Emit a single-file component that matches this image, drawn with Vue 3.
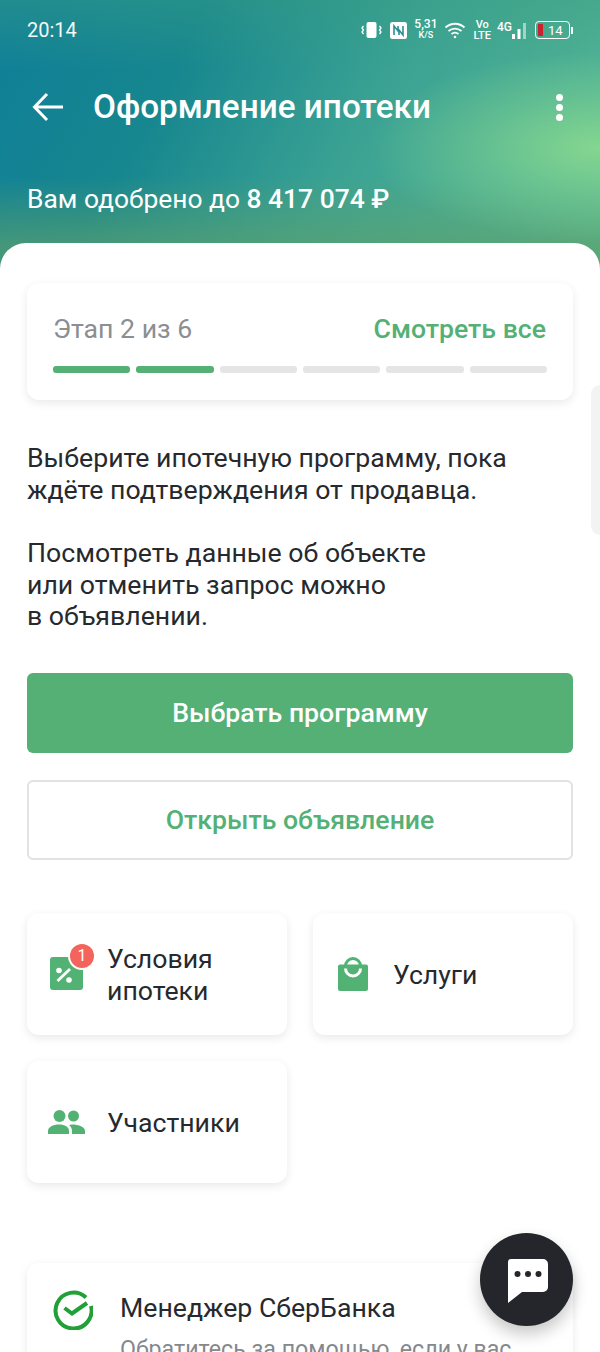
<template>
  <div class="screen">
    <header class="hero">
      <div class="status">
        <span class="time">20:14</span>
        <div class="status_icons">
          <svg width="23" height="20" viewBox="0 0 23 20" fill="none" stroke="#fff" stroke-width="1.3">
            <rect x="6.500" y="2" width="10" height="16" rx="2" fill="#fff" stroke="none" />
            <path d="M3.500 6l-1.500 2 1.500 2-1.500 2 1.500 2M19.500 6l1.500 2-1.500 2 1.500 2-1.500 2" />
          </svg>
          <svg class="nfc" width="17" height="17" viewBox="0 0 17 17">
            <rect width="17" height="17" rx="2.500" fill="#fff" />
            <path d="M4 13V4l4 5V4M9 13V8l4 5V4" fill="none" stroke="#2a8f93" stroke-width="1.600" />
          </svg>
          <div class="speed"><span>5,31</span><span class="speed_unit">K/S</span></div>
          <svg class="wifi" width="22" height="18" viewBox="0 0 22 18" fill="none" stroke="#fff" stroke-width="1.800">
            <path d="M1.500 6.500c5.500-5 13.500-5 19 0M4.500 10c3.800-3.300 9.200-3.300 13 0M7.500 13c2-1.600 5-1.600 7 0" />
            <circle cx="11" cy="16" r="1.300" fill="#fff" stroke="none" />
          </svg>
          <div class="volte"><span>Vo</span><span>LTE</span></div>
          <div class="signal">
            <span class="net">4G</span>
            <svg width="15" height="17" viewBox="0 0 15 17" fill="#fff">
              <rect x="0" y="12" width="3" height="5" />
              <rect x="5.500" y="7" width="3" height="10" />
              <rect x="11" y="1" width="3" height="16" opacity="0.5" />
            </svg>
          </div>
          <div class="battery">
            <div class="battery_body"><i></i><span>14</span></div>
            <b></b>
          </div>
        </div>
      </div>
      <div class="toolbar">
        <svg class="back" width="34" height="32" viewBox="0 0 34 32" fill="none" stroke="#fff" stroke-width="3">
          <path d="M32 16H4M16 3L3.500 16 16 29" />
        </svg>
        <h1>Оформление ипотеки</h1>
        <div class="dots"><i></i><i></i><i></i></div>
      </div>
      <p class="approved">Вам одобрено до <b>8 417 074 ₽</b></p>
    </header>

    <main class="sheet">
      <section class="card steps">
        <div class="steps_top">
          <span class="steps_label">Этап 2 из 6</span>
          <span class="steps_link">Смотреть все</span>
        </div>
        <div class="bars">
          <i v-for="n in 6" :key="n" :class="{ on: n <= 2 }"></i>
        </div>
      </section>

      <div class="intro">
        <p>Выберите ипотечную программу, пока<br>ждёте подтверждения от продавца.</p>
        <p>Посмотреть данные об объекте<br>или отменить запрос можно<br>в объявлении.</p>
      </div>

      <button class="btn primary">Выбрать программу</button>
      <button class="btn outline">Открыть объявление</button>

      <div class="tiles">
        <div class="card tile">
          <div class="tile_icon">
            <svg width="36" height="36" viewBox="0 0 36 36">
              <path d="M29 13h5v18a3 3 0 0 1-3 3h-6v-2h3a1 1 0 0 0 1-1z" fill="#52b274" />
              <rect x="1" y="1" width="28" height="33" rx="3" fill="#52b274" />
              <path d="M8.500 25L21 13" stroke="#fff" stroke-width="2.800" />
              <circle cx="10" cy="14.500" r="2.800" fill="#fff" />
              <circle cx="20" cy="24" r="2.800" fill="#fff" />
            </svg>
            <span class="badge">1</span>
          </div>
          <span class="tile_text">Условия<br>ипотеки</span>
        </div>
        <div class="card tile">
          <div class="tile_icon">
            <svg width="32" height="36" viewBox="0 0 32 36">
              <circle cx="16" cy="10" r="7.500" fill="none" stroke="#52b274" stroke-width="3" />
              <path d="M3 8.500h26a2 2 0 0 1 2 2V33a2 2 0 0 1-2 2H3a2 2 0 0 1-2-2V10.500a2 2 0 0 1 2-2z" fill="#52b274" />
              <path d="M8.500 12.500a7.500 7.500 0 0 0 15 0" fill="none" stroke="#fff" stroke-width="3" />
            </svg>
          </div>
          <span class="tile_text">Услуги</span>
        </div>
        <div class="card tile">
          <div class="tile_icon">
            <svg width="38" height="24" viewBox="0 0 38 24" fill="#52b274">
              <circle cx="11.500" cy="6" r="6" />
              <circle cx="25.500" cy="6" r="5.500" />
              <path d="M0 24v-3c0-4 5-6.500 11-6.500S21 17 21 21v3z" />
              <path d="M24 14.500c7 0 13 2.500 13 6.500v3H24v-3c0-2.500-1-4.500-3-5.800 1-.5 2-.7 3-.7z" />
            </svg>
          </div>
          <span class="tile_text">Участники</span>
        </div>
      </div>

      <section class="card manager">
        <svg class="sber" width="40" height="40" viewBox="0 0 40 40" fill="none" stroke="#21a038" stroke-width="4">
          <path d="M33 7.500A18 18 0 1 0 38 16" />
          <path d="M11.500 18l7.500 5.500L34 13" />
        </svg>
        <div class="manager_text">
          <h2>Менеджер СберБанка</h2>
          <p>Обратитесь за помощью, если у вас возникли вопросы</p>
        </div>
      </section>
    </main>

    <div class="side_tab"></div>
    <button class="chat">
      <svg width="44" height="46" viewBox="0 0 44 46">
        <path d="M6 2h32a5 5 0 0 1 5 5v23a5 5 0 0 1-5 5H17L3 46V5a3 3 0 0 1 3-3z" fill="#fff" />
        <circle cx="12.500" cy="17" r="3" fill="#25262b" />
        <circle cx="23" cy="17" r="3" fill="#25262b" />
        <circle cx="33.500" cy="17" r="3" fill="#25262b" />
      </svg>
    </button>
  </div>
</template>

<script setup>
</script>

<style>
html, body {
  margin: 0;
  background: #fff;
}
</style>

<style scoped>
.screen {
  position: relative;
  width: 600px;
  height: 1352px;
  overflow: hidden;
  background: #fff;
  font-family: Roboto, "Liberation Sans", sans-serif;
  color: #26292d;
}

.hero {
  height: 268px;
  box-sizing: border-box;
  color: #fff;
  background:
    radial-gradient(ellipse 230px 95px at 600px 148px, #84d68f 0%, rgba(132, 214, 143, 0.45) 50%, rgba(132, 214, 143, 0) 100%),
    linear-gradient(to bottom, rgba(90, 160, 110, 0) 66%, rgba(90, 160, 110, 0.7) 92%),
    linear-gradient(to bottom, rgba(60, 160, 130, 0.4) 0, rgba(60, 160, 130, 0) 70px),
    linear-gradient(118deg, #0f7f99 0%, #16868f 28%, #3ba293 58%, #5ab995 100%);
}

.status {
  display: flex;
  align-items: center;
  justify-content: space-between;
  height: 60px;
  padding: 0 27px;
}

.time {
  font-size: 20px;
  opacity: 0.95;
}

.status_icons {
  display: flex;
  align-items: center;
  gap: 7px;
  font-size: 11px;
  line-height: 11px;
  font-weight: 500;
}

.speed,
.volte {
  display: flex;
  flex-direction: column;
  align-items: center;
}

.speed {
  font-size: 12px;
}

.speed_unit {
  font-size: 9px;
}

.signal {
  display: flex;
  align-items: flex-end;
  margin-left: -1px;
}

.net {
  font-size: 12px;
  align-self: flex-start;
}

.battery {
  display: flex;
  align-items: center;
  gap: 1px;
  margin-left: 1px;
}

.battery_body {
  display: flex;
  align-items: center;
  gap: 5px;
  box-sizing: border-box;
  width: 35px;
  height: 18px;
  padding: 0 2px;
  border: 1.500px solid #fff;
  border-radius: 4px;
  font-size: 13px;
  font-weight: 400;
}

.battery_body i {
  width: 5px;
  height: 12px;
  background: #c8222c;
}

.battery > b {
  width: 2px;
  height: 7px;
  background: #fff;
}

.toolbar {
  display: flex;
  align-items: center;
  height: 48px;
  margin-top: 23px;
  padding: 0 37px 0 31px;
}

.toolbar h1 {
  flex: 1;
  margin: 0 0 0 28px;
  font-size: 33.300px;
  font-weight: 500;
  line-height: 48px;
}

.back {
  flex: none;
}

.dots {
  display: flex;
  flex-direction: column;
  gap: 3px;
}

.dots i {
  width: 7px;
  height: 7px;
  border-radius: 50%;
  background: #fff;
}

.approved {
  margin: 51px 27px 0;
  font-size: 26.400px;
  line-height: 34px;
}

.approved b {
  font-weight: 500;
}

.sheet {
  position: relative;
  margin-top: -25px;
  padding: 40px 27px 0;
  background: #fff;
  border-radius: 26px 26px 0 0;
}

.card {
  box-sizing: border-box;
  background: #fff;
  border-radius: 12px;
  box-shadow: 0 3px 10px rgba(0, 0, 0, 0.09);
}

.steps {
  height: 117px;
  padding: 29px 26px 0;
}

.steps_top {
  display: flex;
  justify-content: space-between;
  align-items: center;
  height: 34px;
  font-size: 26.670px;
}

.steps_label {
  color: #8b8e92;
}

.steps_link {
  margin-right: 1px;
  color: #55b075;
  font-weight: 500;
}

.bars {
  display: flex;
  gap: 6px;
  margin-top: 20px;
}

.bars i {
  flex: 1;
  height: 7px;
  border-radius: 3px;
  background: #e5e5e5;
}

.bars i.on {
  background: #55b075;
}

.intro {
  margin-top: 43px;
  font-size: 26.670px;
  line-height: 31.500px;
}

.intro p {
  margin: 0 0 32px;
}

.btn {
  display: block;
  box-sizing: border-box;
  width: 100%;
  height: 80px;
  border-radius: 6px;
  font-family: inherit;
  font-size: 26.670px;
  font-weight: 500;
}

.primary {
  margin-top: 40px;
  border: 0;
  background: #55b075;
  color: #fff;
}

.outline {
  margin-top: 27px;
  border: 2px solid #e2e2e2;
  background: #fff;
  color: #55b075;
}

.tiles {
  display: grid;
  grid-template-columns: 260px 260px;
  gap: 26px;
  margin-top: 53px;
}

.tile {
  display: flex;
  align-items: center;
  height: 122px;
  font-size: 26.670px;
  line-height: 32px;
}

.tile_text {
  padding-top: 3px;
}

.tile_icon {
  position: relative;
  display: flex;
  justify-content: center;
  flex: none;
  width: 80px;
}

.badge {
  position: absolute;
  top: -12px;
  left: 43px;
  width: 24px;
  height: 24px;
  border-radius: 50%;
  background: #f4645c;
  box-shadow: 0 0 0 2px #fff;
  color: #fff;
  font-size: 16px;
  line-height: 24px;
  text-align: center;
}

.manager {
  display: flex;
  height: 200px;
  margin-top: 80px;
  padding: 27px 26px 0;
}

.sber {
  flex: none;
}

.manager_text {
  margin: -4px 0 0 27px;
}

.manager_text h2 {
  margin: 0;
  font-size: 26.670px;
  font-weight: 400;
  line-height: 44px;
}

.manager_text p {
  margin: 4px 0 0;
  font-size: 23.200px;
  line-height: 30px;
  color: #85888c;
}

.side_tab {
  position: absolute;
  top: 385px;
  right: 0;
  width: 9px;
  height: 150px;
  border-radius: 10px 0 0 10px;
  background: #f3f3f3;
}

.chat {
  position: absolute;
  left: 480px;
  top: 1233px;
  display: flex;
  align-items: center;
  justify-content: center;
  width: 93px;
  height: 93px;
  padding: 0;
  border: 0;
  border-radius: 50%;
  background: #25262b;
  box-shadow: 0 8px 16px rgba(0, 0, 0, 0.22);
}
</style>
